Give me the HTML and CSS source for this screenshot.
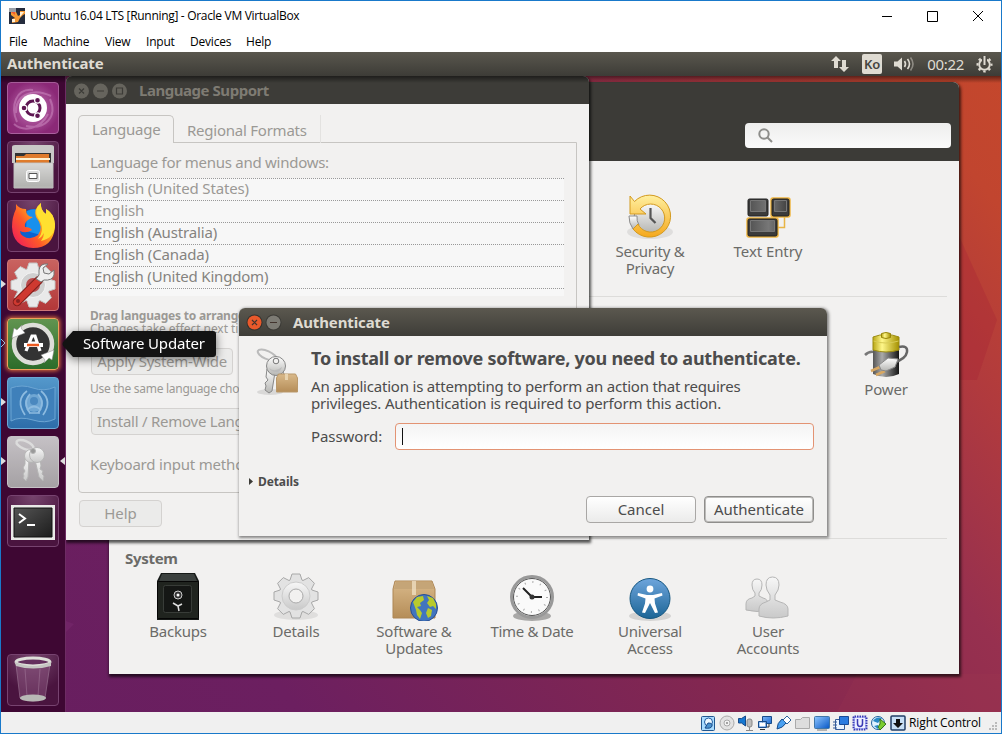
FILE: index.html
```html
<!DOCTYPE html>
<html lang="en">
<head>
<meta charset="utf-8">
<title>Ubuntu 16.04 LTS [Running] - Oracle VM VirtualBox</title>
<link rel="stylesheet" href="styles.css">
</head>
<body>
<svg class="defs" width="0" height="0">
  <defs>
    <linearGradient id="silver" x2="0" y2="1"><stop stop-color="#fff"/><stop offset="1" stop-color="#b5b5b2"/></linearGradient>
    <linearGradient id="pale" x2="0" y2="1"><stop stop-color="#f7f7f7"/><stop offset="1" stop-color="#c9c9c9"/></linearGradient>
    <linearGradient id="gold" x2="0" y2="1"><stop stop-color="#fff0a0"/><stop offset="1" stop-color="#f5a81c"/></linearGradient>
    <linearGradient id="box" x2="0" y2="1"><stop stop-color="#d9b98a"/><stop offset="1" stop-color="#b58d58"/></linearGradient>
    <linearGradient id="blue" x2="0" y2="1"><stop stop-color="#6ea5dc"/><stop offset="1" stop-color="#1c6596"/></linearGradient>
    <linearGradient id="screen" x2="1" y2="1"><stop stop-color="#8fc6ff"/><stop offset="1" stop-color="#0757c6"/></linearGradient>
    <linearGradient id="dark" x2="1" y2="1"><stop stop-color="#555"/><stop offset="1" stop-color="#1c1c1c"/></linearGradient>
    <linearGradient id="key" x2="1" y2="0"><stop stop-color="#555"/><stop offset=".5" stop-color="#777"/><stop offset="1" stop-color="#444"/></linearGradient>
    <linearGradient id="fire" x1="1" y1="0" x2="0" y2=".8"><stop stop-color="#fff04a"/><stop offset=".35" stop-color="#ffb81c"/><stop offset=".65" stop-color="#ff5a28"/><stop offset="1" stop-color="#f01f58"/></linearGradient>
    <path id="gear" stroke-linejoin="round" d="M18 8.100L20 2h8l2 6.100 1 .4 5.700-2.900 5.700 5.700L39.500 17l.4 1 6.100 2v8l-6.100 2-.4 1 2.900 5.700-5.700 5.700L31 39.500l-1 .4-2 6.100h-8l-2-6.100-1-.4-5.700 2.900-5.700-5.700L8.500 31l-.4-1L2 28v-8l6.100-2 .4-1-2.900-5.700 5.700-5.700L17 8.500z"/>
  </defs>
</svg>
<div class="vm">
  <header class="titlebar">
    <svg width="16" height="16" viewBox="0 0 16 16"><path fill="#252c3d" d="M0 0h16v16H0z"/><path fill="#9aa0a8" d="M0 0h7v4H0z"/><path d="M2 4h5l2 4 2-1V3h5v3l-2 1-3 3-2 4-6 1v-4l3-1-4-3z" fill="#f79a35"/><path d="M11 4h4l-4 5zM3 11h3v3H3z" fill="#fff0d5"/><path d="M2 4h4v3z" fill="#ef5a30"/></svg>
    <span class="win-title">Ubuntu 16.04 LTS [Running] - Oracle VM VirtualBox</span>
    <svg class="win-controls" width="104" height="12" viewBox="0 0 104 12" fill="none" stroke="#000"><path d="M0 6.500h10M45.500 1.500h10v10h-10zM91 1l10 10M101 1L91 11"/></svg>
  </header>
  <nav class="menubar"><span class="m1">File</span><span class="m2">Machine</span><span class="m3">View</span><span class="m4">Input</span><span class="m5">Devices</span><span>Help</span></nav>

  <div class="panel">
    <b class="panel-title">Authenticate</b>
    <div class="indicators">
      <svg width="18" height="18" viewBox="0 0 18 18" fill="#dfdbd2"><path d="M5 1l5 5H7v7H3V6H0zM13 17l-5-5h3V5h4v7h3z"/></svg>
      <span class="ko">Ko</span>
      <svg width="20" height="16" viewBox="0 0 20 16" fill="none" stroke="#dfdbd2" stroke-width="1.600"><path d="M0 5.500h3.500l4.500-4v13l-4.500-4H0z" fill="#dfdbd2" stroke="none"/><path d="M10.500 5q2 3 0 6M13.500 3q4 5 0 10"/><path d="M16.500 1.500q5 6.500 0 13" opacity=".45"/></svg>
      <span class="clock">00:22</span>
      <svg width="17" height="17" viewBox="0 0 17 17" fill="none" stroke="#dfdbd2"><circle cx="8.500" cy="8.500" r="7" stroke-width="2" stroke-dasharray="2.500 2.998" stroke-dashoffset="1.250"/><circle cx="8.500" cy="8.500" r="5.300" stroke-width="1.900"/><path d="M8.500 0v8" stroke="#4a4843" stroke-width="5"/><path d="M8.500 0v9" stroke-width="2"/></svg>
    </div>
  </div>

  <main class="desktop">
    <svg class="wallpaper" width="1000" height="636" viewBox="0 0 1000 636"><path d="M958 160l38 84-20 60h-18z" fill="#a62235" opacity=".3"/><path d="M836 636l20-38h144v38z" fill="#b0485a" opacity=".1"/><path d="M65 545l8 3-8 8z" fill="#7c2e74" opacity=".4"/></svg>

    <section class="window settings">
      <div class="settings-head"><div class="search"><svg width="15" height="15" viewBox="0 0 15 15" fill="none" stroke="#8d8d8a" stroke-width="2"><circle cx="6" cy="6" r="4.700"/><path d="M9.500 9.500l4.500 4.500"/></svg></div></div>
      <div class="group personal">
        <div class="item c5"><svg width="48" height="48" viewBox="0 0 48 48"><ellipse cx="24" cy="39" rx="23" ry="7" fill="#000" opacity=".08"/><circle cx="24" cy="24" r="16" fill="url(#silver)" stroke="#888"/><path d="M3 23a21 21 0 0 0 4 13l6-4a14 14 0 0 1-2-9z" fill="url(#silver)" stroke="#8b8b8b"/><path d="M4 3l4.500 5.500A21 21 0 1 1 7 36l5-5a14 14 0 1 0 2-15l6 5H4z" fill="url(#gold)" stroke="#d39a20" stroke-linejoin="round"/><path d="M24.500 15v10l5 5" fill="none" stroke="#555" stroke-width="2.200"/></svg><span>Security &amp;<br>Privacy</span></div>
        <div class="item c6"><svg width="48" height="48" viewBox="0 0 48 48"><path d="M34 34.500h6.500V23" fill="none" stroke="#e8b545" stroke-width="1.500"/><g stroke="#efb643" stroke-width="1.500" fill="#efb643"><rect x="27" y="5" width="19" height="19" rx="2"/><rect x="3" y="25" width="31" height="19" rx="2"/></g><g stroke="#222" fill="#3b3b3b"><rect x="4" y="6" width="20" height="17" rx="1.500"/><rect x="28" y="6" width="17" height="17" rx="1.500"/><rect x="4" y="26" width="29" height="17" rx="1.500"/></g><g fill="url(#key)" stroke="#777"><path d="M6.500 7.500h15v11h-15zM30.500 7.500h12v11h-12zM6.500 27.500h24v11h-24z"/></g></svg><span>Text Entry</span></div>
      </div>
      <div class="group hardware">
        <div class="item c7"><svg width="48" height="48" viewBox="0 0 48 48"><defs><linearGradient id="bat"><stop stop-color="#555"/><stop offset=".35" stop-color="#aaa"/><stop offset="1" stop-color="#151515"/></linearGradient><linearGradient id="cap"><stop stop-color="#b9a716"/><stop offset=".35" stop-color="#fff78a"/><stop offset="1" stop-color="#a59100"/></linearGradient></defs><path d="M3 24q4-4 9-3" fill="none" stroke="#777" stroke-width="2.500"/><path d="M11 8v35q13 6 26 0V8z" fill="url(#bat)"/><path d="M11 6v13q13 4 26 0V6q-13-5-26 0z" fill="url(#cap)" stroke="#9b8b10"/><path d="M11.500 10q12 4 25 0" fill="none" stroke="#d8cb55"/><path d="M19.500 2.500v4q4.500 2 9 0v-4q-4.500-2-9 0z" fill="url(#cap)" stroke="#988508"/><path d="M37 16q9-2 8 5-1 7-14 11" fill="none" stroke="#666" stroke-width="2.500"/><path d="M18 36l-9 4M23 40l-9 4" stroke="#d7a762" stroke-width="2.500"/><path d="M17 34l9-7 10 1-3 8-9 4-5-1z" fill="url(#silver)" stroke="#888"/></svg><span>Power</span></div>
      </div>
      <h2>System</h2>
      <div class="group system">
        <div class="item"><svg width="48" height="48" viewBox="0 0 48 48"><path d="M7 0h34l4 8v39H3V8z" fill="#171a18"/><path d="M8 1h32l3 7H5z" fill="#3b403e"/><rect x="3.500" y="8.500" width="41" height="37" rx="1" fill="#20241f" stroke="#050505"/><rect x="9.500" y="12.500" width="28" height="27" rx="2" fill="#151715" stroke="#383c38"/><circle cx="24" cy="22" r="4" fill="#333" stroke="#ccc"/><circle cx="24" cy="22" r="1.500" fill="#fff"/><path d="M24 33l-5-3M24 33l4-2M24 33l1 5" stroke="#ddd" stroke-width="1.500"/></svg><span>Backups</span></div>
        <div class="item"><svg width="48" height="48" viewBox="0 0 48 48"><ellipse cx="24" cy="42" rx="22" ry="5" fill="#000" opacity=".08"/><use href="#gear" transform="translate(0 -1)" fill="#e2e2e2" stroke="#a8a8a8"/><circle cx="24" cy="23" r="14" fill="url(#pale)" stroke="#ccc"/><circle cx="24" cy="23" r="7" fill="#f2f1f0" stroke="#aaa"/></svg><span>Details</span></div>
        <div class="item"><svg width="48" height="48" viewBox="0 0 48 48"><path d="M3 16l2-8h37l3 8v29H3z" fill="url(#box)" stroke="#ad8655"/><path d="M4 16l2-7h36l2 7z" fill="#c5a577"/><path d="M22 8h4v14h-4z" fill="#f3e5cb" opacity=".7"/><circle cx="34" cy="35" r="13.500" fill="#4275be" stroke="#284f91"/><path d="M23 29l4-5 6-1 1 4-4 3 1 3-4 1 3 3 2 3-2 6-3-4-1-5zM37 23l6 2 3 6v5l-3-3-3 1-3-4 2-3zM38 35l4 2-1 6-3 2-2-5z" fill="#b8ca2c"/></svg><span>Software &amp;<br>Updates</span></div>
        <div class="item time"><svg width="48" height="48" viewBox="0 0 48 48"><ellipse cx="24" cy="43" rx="19" ry="5" opacity=".3"/><circle cx="24" cy="24" r="20.500" fill="#fafafa" stroke="#999" stroke-width="3"/><circle cx="24" cy="24" r="18.500" fill="none" stroke="#555" stroke-width="1"/><circle cx="24" cy="24" r="15" fill="none" stroke="#aaa" stroke-width="2" stroke-dasharray="1 6.850"/><path d="M24 24l-9-9M24 24h10" stroke="#222" stroke-width="2"/><circle cx="24" cy="24" r="2.500" fill="#333"/></svg><span>Time &amp; Date</span></div>
        <div class="item"><svg width="48" height="48" viewBox="0 0 48 48"><ellipse cx="24" cy="43" rx="21" ry="5" opacity=".12"/><circle cx="24" cy="25.500" r="20" fill="url(#blue)" stroke="#175882"/><circle cx="24" cy="16" r="3.400" fill="#fff"/><path d="M12 20l9 2h6l9-2 .5 2.500-8 3 .5 5 3 9-3 .5-5-10-5 10-3-.5 3-9 .5-5-8-3z" fill="#fff"/></svg><span>Universal<br>Access</span></div>
        <div class="item"><svg width="48" height="48" viewBox="0 0 48 48" fill="url(#pale)" stroke="#b5b5b5"><path d="M2 37v-6q0-5 6-6l3-2v-3q-3-3-3-8 0-6 5-6t5 6q0 5-3 8v3l4 2q5 1 5 6v6q-11 3-22 0z"/><path d="M13 43v-7q0-5 7-7l4-2v-5q-4-5-4-10 0-8 6.500-8T33 12q0 5-4 10v5l5 2q8 2 8 7v7q-15 4-29 0z" transform="translate(2)"/></svg><span>User<br>Accounts</span></div>
      </div>
    </section>

    <section class="window language">
      <div class="caption inactive"><svg width="54" height="16" viewBox="0 0 54 16"><g fill="#66645d"><circle cx="7.500" cy="8" r="7.500"/><circle cx="26.500" cy="8" r="7.500"/><circle cx="45.500" cy="8" r="7.500"/></g><path d="M5 5.500l5 5m0-5l-5 5M23 8h7M42.500 5h6v6h-6z" fill="none" stroke="#3c3b37" stroke-width="1.200"/></svg><b>Language Support</b></div>
      <div class="tabs"><span class="tab active">Language</span><span class="tab">Regional Formats</span></div>
      <div class="pane">
        <p class="lead">Language for menus and windows:</p>
        <ul class="langs"><li>English (United States)</li><li>English</li><li class="avail">English (Australia)</li><li class="avail">English (Canada)</li><li class="avail">English (United Kingdom)</li></ul>
        <p class="drag"><b>Drag languages to arrange</b></p>
        <p class="small changes">Changes take effect next ti</p>
        <button class="soft apply">Apply System-Wide</button>
        <p class="small same">Use the same language cho</p>
        <button class="soft install">Install / Remove Lang</button>
        <p class="keyboard">Keyboard input metho</p>
      </div>
      <button class="soft help">Help</button>
    </section>

    <section class="window dialog">
      <div class="caption"><svg width="36" height="18" viewBox="0 0 36 18"><circle cx="8.500" cy="9.500" r="8" fill="#33322e"/><circle cx="8.500" cy="9.500" r="7" fill="#e9592b"/><circle cx="27.500" cy="9.500" r="8" fill="#3b3a36"/><circle cx="27.500" cy="9.500" r="7" fill="#7d7b74"/><path d="M6 7l5 5m0-5l-5 5M24 9.500h7" stroke="#42342e" stroke-width="1.200"/></svg><b>Authenticate</b></div>
      <div class="auth">
        <svg class="auth-icon" width="48" height="50" viewBox="0 0 48 50"><ellipse cx="14" cy="45" rx="13" ry="3" opacity=".1"/><ellipse cx="11" cy="8" rx="10" ry="4" transform="rotate(24 11 8)" fill="none" stroke="#bbb" stroke-width="2"/><g fill="url(#silver)" stroke="#888"><path d="M21 22l7 16 4-3-7-14z"/><path d="M19 25l-3 19-3 2-4-3 1-4-1-3 3-3-2-3 1-8z"/><circle cx="20" cy="19" r="9.500"/></g><path d="M13 21q6 5 13-1-2 6-6 5-5 0-7-4z" fill="#bbb"/><circle cx="20" cy="14" r="2.800" fill="#f2f1f0" stroke="#777"/><path d="M20.500 31l2-4h17l2 4v14h-21z" fill="url(#box)" stroke="#b9986a"/><path d="M29 27h3v6h-3z" fill="#e8d3ae"/></svg>
        <div class="auth-body">
          <h1>To install or remove software, you need to authenticate.</h1>
          <p class="p1">An application is attempting to perform an action that requires</p>
          <p class="p2">privileges. Authentication is required to perform this action.</p>
          <div class="password"><label>Password:</label><div class="field"><i></i></div></div>
        </div>
      </div>
      <div class="details"><svg width="5" height="8" viewBox="0 0 5 8"><path d="M0 0l4 3.500L0 7z" fill="#3c3b37"/></svg><b>Details</b></div>
      <div class="actions"><button class="cancel">Cancel</button><button class="default">Authenticate</button></div>
    </section>

    <aside class="launcher">
      <div class="tile dash"><svg width="52" height="52" viewBox="0 0 52 52"><path d="M26 8C9 6 3 24 10 40M43 17c8 18-5 31-24 27M9 31C8 14 25 5 44 14M41 32C33 48 16 50 7 42" fill="none" stroke="#d69acb" stroke-width="2" opacity=".45"/><circle cx="26" cy="26" r="14" fill="#fff"/><circle cx="26" cy="26" r="7" fill="none" stroke="#5e1652" stroke-width="3"/><g fill="#5e1652" stroke="#fff" stroke-width="1.200"><circle cx="17" cy="26" r="2.900"/><circle cx="30.500" cy="18.200" r="2.900"/><circle cx="30.500" cy="33.800" r="2.900"/></g></svg></div>
      <div class="tile"><svg width="52" height="52" viewBox="0 0 52 52"><path d="M5 6q0-2 3-2h36q3 0 3 2v16H5z" fill="#c9c9c7"/><path d="M8 12h36v10H8z" fill="#333"/><path d="M9 15h8l2-2h23v9H9z" fill="#df7b2c"/><path d="M9 17h34v2H9z" fill="#fff1d0"/><path d="M7 22h39v25H7z" fill="url(#silver)" stroke="#bbb"/><path d="M7.500 22.500h38v23h-38z" fill="#a9a9a7" opacity=".45"/><rect x="19.500" y="29.500" width="13" height="11" rx="2" fill="#ddd" stroke="#fff"/><path d="M22 32.500h8v5h-8z" fill="#fff" stroke="#555"/></svg></div>
      <div class="tile"><svg width="52" height="52" viewBox="0 0 52 52"><circle cx="27" cy="25" r="16" fill="#0b62d0"/><path d="M20 11q14-6 20 10l-6 14-15-4z" fill="#1790ed"/><path d="M9 9q-4 8-4 18 1 20 21 21 20 0 22-21 0-13-9-18v5q-6-4-5-11-8 6-5 14 8 10 2 18-8 6-15 1-3-2-3-5 6 3 12-1-2-3-7-3-1-4 3-7l5-3q-7 0-7-8-7 0-10-5z" fill="url(#fire)"/><path d="M34 3q-8 7-3 15 8 11 0 21 4-2 6-6 0 4-3 8 14-3 14-17-1-11-9-15v5q-6-4-5-11z" fill="#ffe030"/></svg></div>
      <div class="tile red"><svg width="52" height="52" viewBox="0 0 52 52"><use href="#gear" transform="translate(2 2)" fill="#e9e9e9" stroke="#c4c4c4"/><circle cx="26" cy="26" r="12.500" fill="#cfcfcf" stroke="#f4f4f4"/><circle cx="26" cy="26" r="7" fill="#b94a4b"/><path d="M10 43l22-22" stroke="#801e1b" stroke-width="8.500" stroke-linecap="round"/><path d="M10 43l22-22" stroke="#cf3930" stroke-width="6.500" stroke-linecap="round"/><path d="M31 21l3 2 3-2q8 1 10-5V11l-5 4-5-1-1-5 5-4q-8-1-9 6v5l-3 4z" fill="#eee" stroke="#777"/><circle cx="11" cy="42" r="2" fill="#822"/></svg></div>
      <div class="tile green"><svg width="52" height="52" viewBox="0 0 52 52"><circle cx="26" cy="26" r="19" fill="#333" stroke="#deded9" stroke-width="4.500"/><path d="M5 20l2-10 3 2 5-5-1 3 4 5zM47 32l-2 10-3-2-5 5 1-3-4-5z" fill="#fff" stroke="#888" stroke-width=".5"/><path d="M19 33l6-15h3l5 15M22 25h8" fill="none" stroke="#fff" stroke-width="3.200"/><path d="M17 27h19" stroke="#fff" stroke-width="4"/><path d="M20 27h12" stroke="#ed5b21" stroke-width="2.500"/></svg></div>
      <div class="tile bluebg"><svg width="52" height="52" viewBox="0 0 52 52"><path d="M4 11q11-4 22 0t22-1v32q-10 5-22 1-13-4-22 1z" fill="#3f80ba" stroke="#6ca5d3"/><circle cx="27" cy="26" r="9" fill="#6fa6d3"/><g fill="none" stroke="#8dbbe0" stroke-width="1.700"><path d="M20 14q-12 9-2 24M34 14q12 10 2 24M23 17q-8 9 0 19M31 17q8 9 0 19"/><path d="M20 33q7-7 14 0M22 36h11"/></g><circle cx="27" cy="24" r="4" fill="#4a88bf"/></svg></div>
      <div class="tile gray"><svg width="52" height="52" viewBox="0 0 52 52" stroke="#b5b5b5"><ellipse cx="18" cy="9" rx="9" ry="4" transform="rotate(22 18 9)" fill="none" stroke="#dcdcdc" stroke-width="2.500"/><g fill="url(#pale)"><path d="M22 24l-1 17-2 4-3-3 1-2-1-2 2-3-2-3 2-4 0-6z"/><path d="M28 24l4 17 4 4 1-5-2-2 1-3-3-2 1-3-1-8z"/><circle cx="24" cy="20" r="6.500"/><circle cx="30" cy="19" r="7.500"/></g><circle cx="26" cy="15" r="2.500" fill="#999"/></svg></div>
      <div class="tile"><svg width="52" height="52" viewBox="0 0 52 52"><path d="M4 10h44v35H4z" fill="#e9e9e7"/><path d="M7 13h38v29H7z" fill="url(#dark)" stroke="#111"/><path d="M12 19l6 4.500-6 4.500M20 30h8" fill="none" stroke="#fff" stroke-width="2"/></svg></div>
      <div class="tile trash"><svg width="52" height="52" viewBox="0 0 52 52"><path d="M9 10l4 34q13 6 25 0l5-34z" fill="#96608a" opacity=".45" stroke="#c6a6bf"/><path d="M18 15l2 27M33 15l-2 27" stroke="#c6a6bf" opacity=".3"/><ellipse cx="26" cy="44" rx="13" ry="3.500" fill="#b8b8b5"/><ellipse cx="26" cy="8" rx="17" ry="4" fill="#64305e" stroke="#deded9" stroke-width="3"/><path d="M8 8q18 8 36 0v4q-18 5-35 0z" fill="#c5c5c2"/></svg></div>
      <svg class="pips" width="66" height="636" viewBox="0 0 66 636"><path d="M0 204l5 4-5 4zM0 322l5 4-5 4zM0 381l5 4-5 4zM64 381l-5 4 5 4z" fill="#ddd"/><path d="M0 263l4 4-4 4" fill="none" stroke="#9bbbd7"/></svg>
    </aside>
    <div class="tooltip"><svg width="15" height="26" viewBox="0 0 15 26"><path d="M15 0h-4L2 10q-3 3 0 6l9 10h4z" fill="#131313"/></svg><span>Software Updater</span></div>
  </main>

  <footer class="status">
    <div class="devices">
      <svg width="15" height="16" viewBox="0 0 15 16"><rect x=".5" y="1.500" width="13" height="14" rx="1" fill="#a9dcff" stroke="#21578f"/><circle cx="7.500" cy="7" r="4" fill="#ecf8ff" stroke="#1d5ba0"/><path d="M4 13l3-5q5 0 4 3-1 3-7 2" fill="#4b92ce" stroke="#174b8a"/></svg>
      <svg width="16" height="16" viewBox="0 0 16 16"><circle cx="8" cy="8" r="7" fill="#e2e2e2" stroke="#aaa"/><circle cx="8" cy="8" r="3" fill="#f2f2f2" stroke="#aaa"/><circle cx="8" cy="8" r="1" fill="#888"/></svg>
      <svg width="16" height="16" viewBox="0 0 16 16"><path d="M.5 3.500h3l4-2.500v10l-4-3h-3z" fill="#1678d1" stroke="#174b8a"/><rect x="9" y="4" width="5" height="8" rx="2" fill="#bbb" stroke="#888"/><path d="M11.500 12v3M8 15.500h7" stroke="#888"/></svg>
      <svg width="16" height="16" viewBox="0 0 16 16"><path d="M5.500 1.500h9v7h-9zM1.500 6.500h8v6h-8z" fill="url(#screen)" stroke="#174b8a"/><path d="M2.500 7.500h6v4h-6z" fill="#fff"/><path d="M3 14.500h5M12 9v3h-2" fill="none" stroke="#333"/></svg>
      <svg width="16" height="16" viewBox="0 0 16 16"><path d="M1 14q0-6 5-10l4 4q-3 5-9 6z" fill="#4aa0f0" stroke="#174b8a"/><path d="M7 5l4-4 4 4-4 4z" fill="#fff" stroke="#2b64a0"/></svg>
      <svg width="16" height="16" viewBox="0 0 16 16"><path d="M.5 4.500h5l2-2h7v11H.5z" fill="#ddd" stroke="#aaa"/></svg>
      <svg width="16" height="16" viewBox="0 0 16 16"><rect x=".5" y="1.500" width="15" height="12" rx="1" fill="url(#screen)" stroke="#4076a8"/><path d="M3 15h10" stroke="#777"/></svg>
      <svg width="16" height="16" viewBox="0 0 16 16"><path d="M2.500 4.500h9v10h-9z" fill="#e9f3ff" stroke="#345b98"/><path d="M6.500 1.500h9v8h-9z" fill="#2a7be0" stroke="#184a97"/><path d="M0 7h4M0 10h4M0 13h4" stroke="#345b98"/></svg>
      <svg width="16" height="16" viewBox="0 0 16 16"><rect x="1.500" y="1.500" width="13" height="13" rx="1" fill="#b9c2ff" stroke="#3939b2" stroke-width="2" stroke-dasharray="1.500 1"/><path d="M3 3h10v10H3z" fill="#eef0ff"/><path d="M5.500 4v4.500q0 3 2.500 3t2.500-3V4" fill="none" stroke="#3939b2" stroke-width="1.500"/></svg>
      <svg width="17" height="16" viewBox="0 0 17 16"><circle cx="7" cy="8" r="6.500" fill="#e0f2ff" stroke="#20619d"/><path d="M2 6q3-5 9-3l-4 5zM3 11l4-1v4z" fill="#2988c6"/><path d="M9 4l6 5-6 6-2-3 2-3z" fill="#7acc2f" stroke="#34711c"/></svg>
      <svg class="hostkey" width="16" height="16" viewBox="0 0 16 16"><rect x="1" y="1" width="14" height="14" rx="1" fill="#c7dff5" stroke="#203e65" stroke-width="1.500"/><path d="M6 4h4v4h3l-5 5-5-5h3z" fill="#111"/></svg>
    </div>
    <span class="host">Right Control</span>
    <svg class="grip" width="9" height="9" viewBox="0 0 9 9"><path d="M6 0h2v2H6zM3 3h2v2H3zM6 3h2v2H6zM0 6h2v2H0zM3 6h2v2H3zM6 6h2v2H6z" fill="#bbb"/></svg>
  </footer>
</div>
</body>
</html>
```

FILE: styles.css
```css
* { box-sizing: border-box; }
body, p, h1, h2, ul { margin: 0; padding: 0; }
body { width: 1002px; height: 734px; overflow: hidden; font: 15px/17px "Noto Sans", "Open Sans", sans-serif; }
svg { display: block; flex: none; }
button { font: inherit; padding: 0; white-space: nowrap; }
span, b, h1, p, label { white-space: nowrap; }
.defs { position: absolute; }
.vm { width: 1002px; height: 734px; border: 1px solid #1979ca; display: flex; flex-direction: column; background: #fff; }

/* Host window chrome */
.titlebar { height: 29px; display: flex; align-items: center; padding: 0 15px 0 8px; font: 12px/16px "Open Sans", sans-serif; }
.win-title { margin-left: 5px; letter-spacing: -.31px; }
.win-controls { margin-left: auto; }
.menubar { height: 22px; display: flex; padding: 4px 8px; font: 12px/16px "Open Sans", sans-serif; letter-spacing: -.2px; }
.m1 { width: 34px; } .m2 { width: 62px; } .m3 { width: 41px; } .m4 { width: 44px; } .m5 { width: 56px; }
.status { height: 21px; background: #f0f0f0; display: flex; align-items: center; padding: 0 3px 0 700px; font: 12px/16px "Open Sans", sans-serif; }
.devices { display: flex; width: 208px; gap: 3px; }
.hostkey { margin-left: -1px; }
.host { letter-spacing: -.1px; }
.grip { margin: 8px 0 0 auto; }

/* Guest top panel */
.panel { height: 24px; flex: none; display: flex; align-items: center; justify-content: space-between; padding: 0 8px 0 6px; background: linear-gradient(#5a574e, #3d3c37); color: #dfdbd2; }
.panel-title { letter-spacing: -.15px; margin-top: -1px; }
.indicators { display: flex; align-items: center; }
.ko { width: 20px; height: 20px; margin: 0 12px 0 13px; border-radius: 2px; background: #dfdbd2; color: #45443f; font-size: 13px; line-height: 21px; text-align: center; font-weight: 600; }
.clock { margin: 0 12px 0 13px; letter-spacing: -.3px; }

.desktop { height: 636px; flex: none; position: relative; overflow: hidden; background: linear-gradient(52deg, #671e5f 0%, #6c1f60 20%, #85284f 52%, #97304f 70%, #b03a3e 82%, #c1452f 93%, #c4472c 100%); }
.desktop::after { content: ""; position: absolute; inset: 0 0 auto; height: 7px; background: linear-gradient(rgba(0,0,0,.5), transparent); }
.wallpaper { position: absolute; }

/* Launcher */
.launcher { position: absolute; width: 65px; height: 636px; background: #3e0733; border-right: 1px solid #6d2c63; padding: 6px; display: flex; flex-direction: column; gap: 7px; }
.tile { width: 52px; height: 52px; flex: none; border-radius: 4px; border: 1px solid #774370; background: radial-gradient(circle at 50% 0, #76456d, #4a143f 65%); }
.tile svg { margin: -1px; }
.dash { background: radial-gradient(circle, #c476b7, #8b2977 75%); border-color: #aa5f9d; }
.red { background: linear-gradient(#c96360, #b33738); border-color: #ce7777; }
.green { background: linear-gradient(#619450, #2c6c2a); border-color: #eea15a; box-shadow: 0 0 4px 1px #e0703c; }
.bluebg { background: linear-gradient(#5498cb, #2d6da9); border-color: #6ba7d5; }
.gray { background: linear-gradient(#c5c1c5, #a5a1a4); border-color: #c6c2c6; }
.trash { margin-top: auto; }
.pips { position: absolute; left: 0; top: 0; }
.tooltip { position: absolute; left: 61px; top: 255px; display: flex; filter: drop-shadow(0 2px 5px rgba(0,0,0,.55)); }
.tooltip span { width: 140px; height: 26px; margin-left: -1px; padding-left: 7px; border-radius: 0 3px 3px 0; background: #131313; color: #fff; line-height: 25px; letter-spacing: -.15px; }

/* Guest windows */
.window { position: absolute; background: #f2f1f0; border-radius: 6px 6px 0 0; box-shadow: 1px 2px 3px 1px rgba(0,0,0,.65); }
.caption { height: 28px; display: flex; align-items: center; border-radius: 6px 6px 0 0; background: linear-gradient(#5b584f, #3e3d38); color: #dfdbd2; padding-left: 7px; }
.caption b { margin-left: 11px; letter-spacing: -.13px; }
.inactive { background: #3d3c38; color: #7e7b73; padding: 1px 0 0 8px; }
.caption.inactive b { margin: -1px 0 0 11px; letter-spacing: -.46px; }

.settings { left: 108px; top: 6px; width: 850px; height: 592px; color: #6b6b68; }
.settings-head { height: 79px; border-radius: 6px 6px 0 0; background: #3c3b37; display: flex; justify-content: flex-end; padding: 41px 8px 0; }
.search { width: 206px; height: 25px; border-radius: 4px; background: linear-gradient(#eeeeed, #fafafa); padding: 5px 13px; }
.group { display: grid; grid-template-columns: repeat(7, 118px); margin: 0 12px 0 10px; width: 828px; }
.personal { height: 136px; padding-top: 32px; }
.hardware { height: 242px; padding-top: 34px; }
.personal, .hardware { border-bottom: 1px solid #dddcda; }
.item { display: flex; flex-direction: column; align-items: center; gap: 2px; text-align: center; letter-spacing: -.2px; }
.time { letter-spacing: -.35px; }
.c5 { grid-column: 5; } .c6 { grid-column: 6; letter-spacing: -.08px; } .c7 { grid-column: 7; }
h2 { font-size: 15px; line-height: 17px; padding: 11px 0 6px 16px; letter-spacing: -.3px; }

.language { left: 65px; top: 0; width: 523px; height: 464px; color: #9b9995; }
.tabs { display: flex; height: 28px; margin: 11px 12px 0; position: relative; z-index: 1; letter-spacing: -.2px; }
.tab { padding: 7px 13px; height: 28px; border-right: 1px solid #e3e2e0; }
.tab + .tab { letter-spacing: -.24px; }
.tab.active { border: 1px solid #c7c5c2; border-bottom: 0; border-radius: 5px 5px 0 0; width: 96px; padding: 5px 13px; background: #f2f1f0; }
.pane { margin: -1px 12px 0; height: 351px; border: 1px solid #c7c5c2; border-radius: 0 0 4px 4px; padding: 11px 11px 0; overflow: hidden; }
.lead { letter-spacing: -.27px; }
.langs { list-style: none; margin: 7px 1px 0 0; height: 118px; border-top: 1px dotted #999; background: #f7f7f7; }
.langs li { height: 22px; line-height: 19px; padding-left: 4px; border-bottom: 1px dotted #999; letter-spacing: -.14px; }
.langs .avail { color: #85837f; }
.langs li:last-child { letter-spacing: -.2px; }
.drag { font-size: 12px; line-height: 13px; margin-top: 13px; letter-spacing: -.2px; }
.small { font-size: 12px; letter-spacing: -.28px; }
.changes { line-height: 13px; letter-spacing: -.05px; }
.soft { display: block; height: 27px; border: 1px solid #d4d2d0; border-radius: 4px; background: #ebebea; color: #9b9995; }
.apply { width: 142px; margin: 13px 0 0 1px; letter-spacing: -.3px; }
.same { margin-top: 5px; }
.install { margin: 11px 0 0 1px; width: 215px; padding-left: 5px; text-align: left; letter-spacing: -.25px; }
.keyboard { margin-top: 21px; letter-spacing: -.2px; }
.help { width: 83px; margin: 7px 0 0 13px; }

.dialog { left: 238px; top: 232px; width: 588px; height: 228px; color: #4c4c4c; box-shadow: 1px 1px 3px 1px rgba(0,0,0,.45); }
.auth { display: flex; padding: 10px 13px 0 17px; }
.auth-icon { width: 48px; margin: 1px 7px 0 0; }
.auth-body { flex: 1; }
h1 { font-size: 18px; line-height: 24px; letter-spacing: -.25px; }
.p1 { margin-top: 8px; letter-spacing: -.2px; }
.p2 { letter-spacing: -.165px; }
.password { display: flex; align-items: center; justify-content: space-between; margin-top: 11px; letter-spacing: -.08px; }
.field { width: 419px; height: 27px; border: 1px solid #e39373; border-radius: 4px; background: linear-gradient(#f4f4f4, #fff); padding: 4px 6px; }
.field i { display: block; width: 1px; height: 17px; background: #111; }
.details { display: flex; align-items: center; gap: 4px; margin: 23px 0 0 10px; font-size: 12px; letter-spacing: -.1px; }
.actions { display: flex; justify-content: flex-end; gap: 8px; padding: 6px 13px 0; }
.actions button { width: 110px; height: 27px; border: 1px solid #a9a7a5; border-radius: 4px; background: linear-gradient(#fff, #ebebea); color: #4c4c4c; }
.actions .default { border-color: #8f8e8c; box-shadow: inset 0 0 0 1px #bcbbb9; }
```
